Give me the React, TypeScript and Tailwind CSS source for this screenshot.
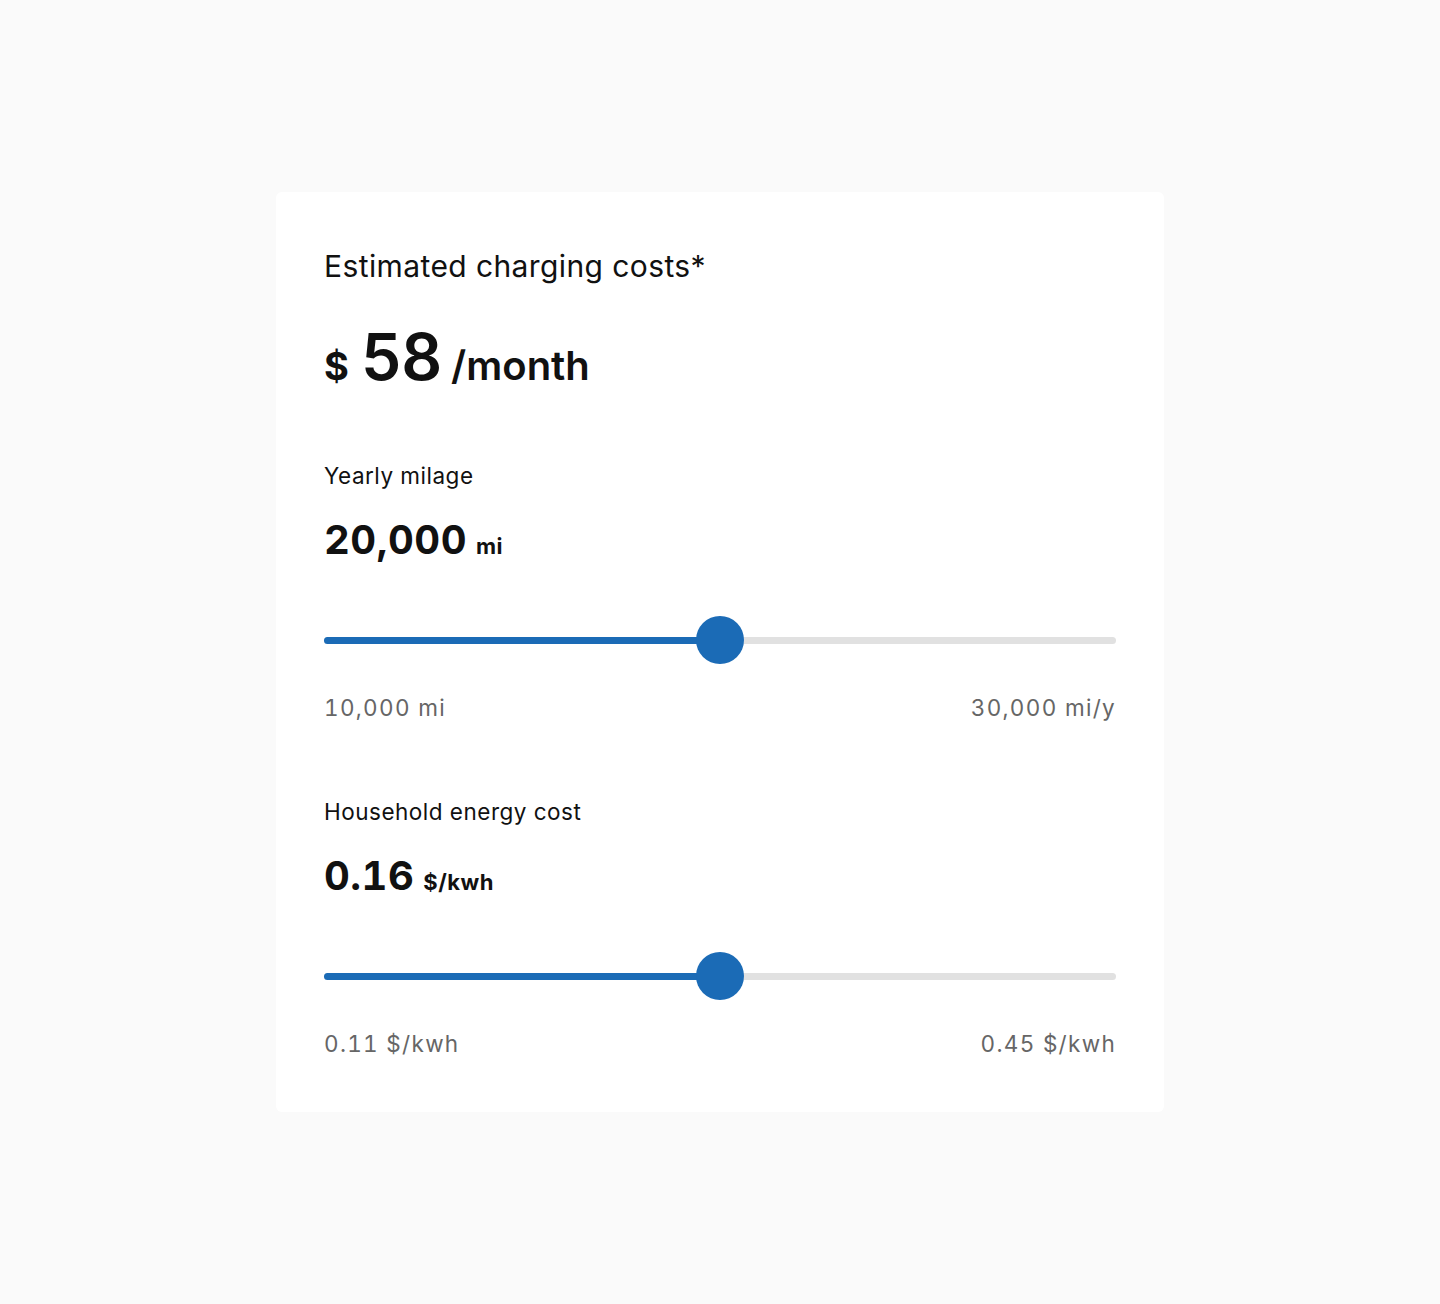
import React from "react";

function Slider({ pct }: { pct: number }) {
  return (
    <div className="relative h-12 flex items-center">
      <div className="w-full h-[7px] rounded-full bg-[#e1e1e1]" />
      <div
        className="absolute left-0 h-[7px] rounded-full bg-[#1b6bb6]"
        style={{ width: `${pct}%` }}
      />
      <div
        className="absolute w-12 h-12 rounded-full bg-[#1b6bb6] -translate-x-1/2"
        style={{ left: `${pct}%` }}
      />
    </div>
  );
}

function Section({
  label,
  value,
  unit,
  min,
  max,
}: {
  label: string;
  value: string;
  unit: string;
  min: string;
  max: string;
}) {
  return (
    <div>
      <div className="text-[22.5px] leading-[30px] text-[#111] tracking-[0.5px]">{label}</div>
      <div className="mt-[27px] flex items-baseline gap-[9px] h-[44px]">
        <span className="text-[40px] leading-[44px] font-bold text-[#111] tabular-nums tracking-[0.5px]">{value}</span>
        <span className="text-[22px] font-bold text-[#111] tracking-[0.5px]">{unit}</span>
      </div>
      <div className="mt-[54px]">
        <Slider pct={50} />
      </div>
      <div className="mt-[29px] flex justify-between text-[22.5px] leading-[30px] text-[#666] tracking-[1.3px] tabular-nums">
        <span>{min}</span>
        <span>{max}</span>
      </div>
    </div>
  );
}

export default function App() {
  return (
    <div
      className="min-h-[1304px] bg-[#fafafa] flex justify-center pt-[192px]"
      style={{ fontFamily: "Inter, 'Noto Sans', sans-serif" }}
    >
      <div className="w-[888px] h-[920px] bg-white rounded-[6px] px-12 pt-[54px]">
        <div className="text-[30px] leading-[40px] text-[#111] tracking-[0.4px]">
          Estimated charging costs*
        </div>
        <div className="mt-[31px] flex items-baseline text-[#111] h-[80px]">
          <span className="text-[38px] font-bold mr-[12px]">$</span>
          <span className="text-[64px] leading-[80px] font-semibold mr-[9px]">58</span>
          <span className="text-[40px] font-semibold">/month</span>
        </div>
        <div className="mt-[64px]">
          <Section
            label="Yearly milage"
            value="20,000"
            unit="mi"
            min="10,000 mi"
            max="30,000 mi/y"
          />
        </div>
        <div className="mt-[74px]">
          <Section
            label="Household energy cost"
            value="0.16"
            unit="$/kwh"
            min="0.11 $/kwh"
            max="0.45 $/kwh"
          />
        </div>
      </div>
    </div>
  );
}
